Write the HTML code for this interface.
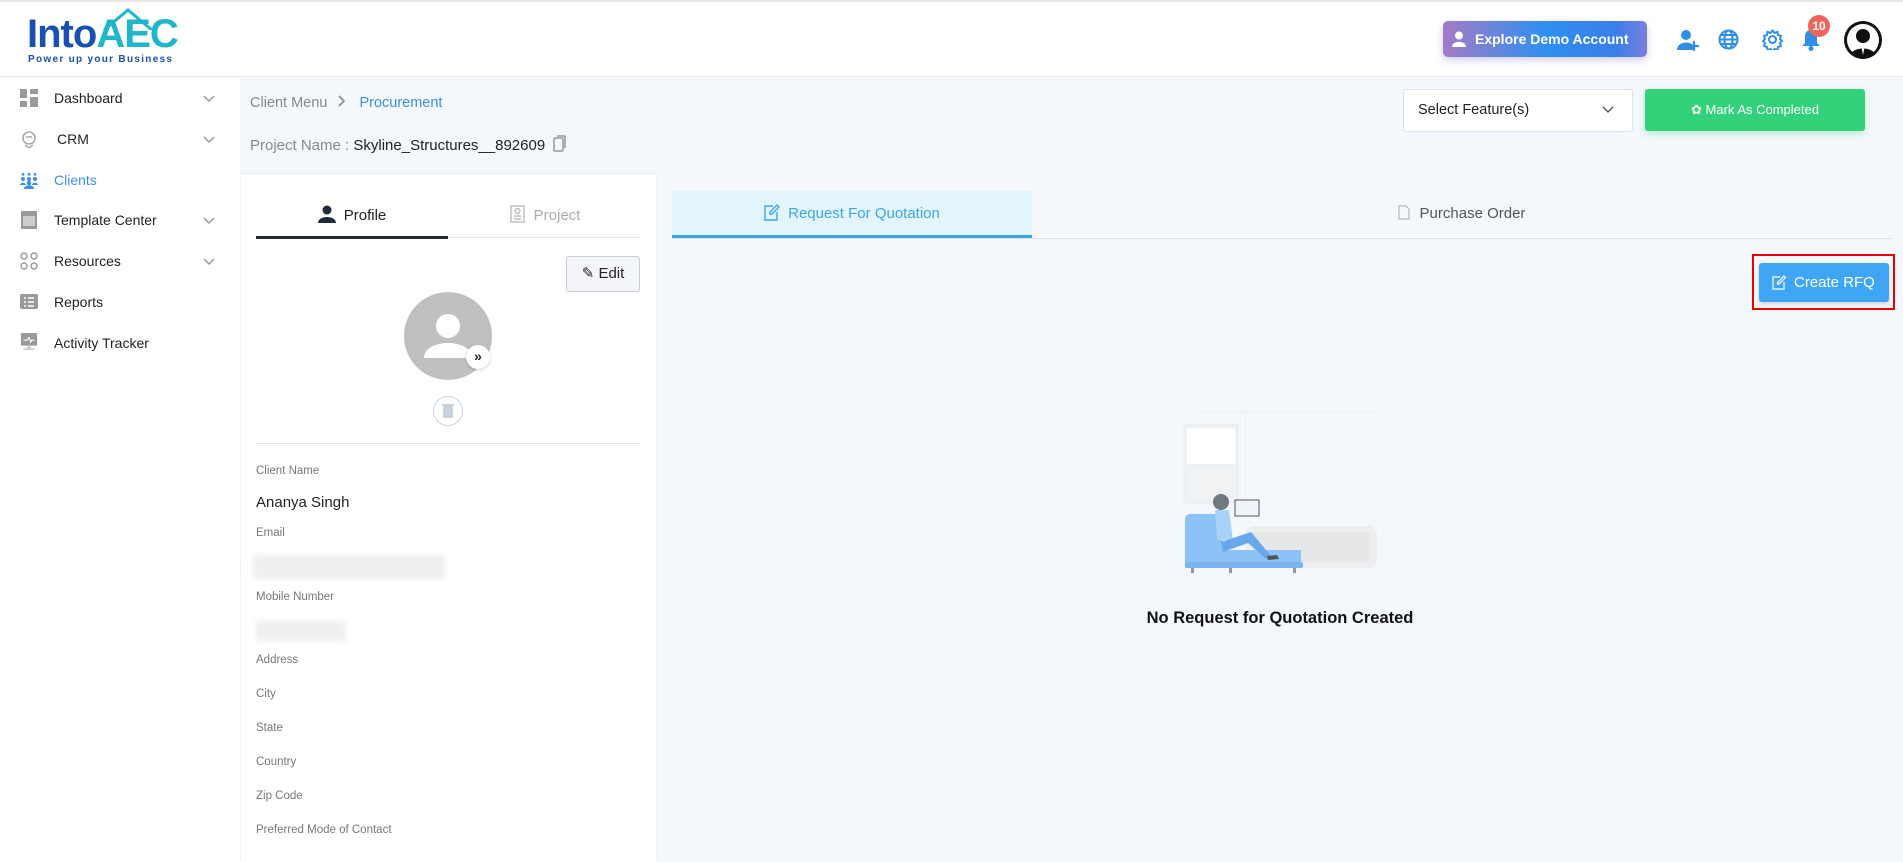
<!DOCTYPE html>
<html><head><meta charset="utf-8">
<style>
*{box-sizing:border-box;margin:0;padding:0}
body{width:1903px;height:862px;overflow:hidden;background:#f4f8fc;font-family:"Liberation Sans",sans-serif;color:#222;position:relative}
.abs{position:absolute}
header{position:absolute;left:0;top:0;width:1903px;height:77px;background:#fff;border-bottom:1px solid #e6e9ee;border-top:2px solid #e4e4e4}
.side{position:absolute;left:0;top:77px;width:240px;height:785px;background:#fff}
.si{position:absolute;left:0;width:240px;height:30px;display:flex;align-items:center;font-size:14px;color:#222}
.si .ic{position:absolute;left:20px;width:18px;height:18px}
.si .tx{position:absolute;left:54px}
.si .ch{position:absolute;left:202px;top:8px}
.lbl{position:absolute;left:256px;font-size:11.5px;color:#777}
.card{position:absolute;left:241px;top:175px;width:415px;height:687px;background:#fff;box-shadow:0 0 4px rgba(0,0,0,.04)}
</style></head><body>
<header>
 <div class="abs" style="left:27px;top:12px;font-size:40px;font-weight:bold;color:#1a4fb4;letter-spacing:-1px;line-height:40px">Into<span style="color:#1fb6c9">AEC</span></div>
 <svg class="abs" style="left:98px;top:6px" width="60" height="22"><path d="M6 22 L30 2 L54 22" fill="none" stroke="#1fb6c9" stroke-width="3"/></svg>
 <div class="abs" style="left:28px;top:52px;font-size:10px;font-weight:bold;color:#1a4fb4;letter-spacing:1.3px">Power up your Business</div>
 <div class="abs" style="left:1443px;top:19px;width:204px;height:36px;border-radius:5px;background:linear-gradient(90deg,#a67bc6,#2f8ff0 50%,#3a7fe8 85%,#7b7fe0);box-shadow:0 3px 8px rgba(90,90,200,.3);color:#fff;font-weight:bold;font-size:14px;line-height:36px;padding-left:32px">
  <svg class="abs" style="left:9px;top:10px" width="16" height="16"><circle cx="7" cy="4.5" r="4" fill="#fff"/><path d="M0 16 C0 9 14 9 14 16Z" fill="#fff"/></svg>Explore Demo Account</div>
 <svg class="abs" style="left:1677px;top:27px" width="22" height="22"><circle cx="9" cy="6" r="5" fill="#2f8fe8"/><path d="M0 21 C0 11 18 11 18 21Z" fill="#2f8fe8"/><path d="M17 13v8M13 17h8" stroke="#2f8fe8" stroke-width="2.2" stroke-linecap="round"/></svg>
 <svg class="abs" style="left:1718px;top:27px" width="21" height="21" fill="none" stroke="#2f8fe8" stroke-width="2"><circle cx="10.5" cy="10.5" r="9"/><ellipse cx="10.5" cy="10.5" rx="4" ry="9"/><path d="M1.5 10.5h18M3 6h15M3 15h15"/></svg>
 <svg class="abs" style="left:1762px;top:27px" width="21" height="21" fill="none" stroke="#2f8fe8" stroke-width="2"><circle cx="10.5" cy="10.5" r="3.5"/><path d="M10.5 1.5l2 2.5 3-1 .5 3 3 1-1 3 2 2-2 2 1 3-3 1-.5 3-3-1-2 2.5-2-2.5-3 1-.5-3-3-1 1-3-2-2 2-2-1-3 3-1 .5-3 3 1z"/></svg>
 <svg class="abs" style="left:1801px;top:27px" width="20" height="22"><path d="M10 1C5 1 4 5 4 8v6l-3 3h18l-3-3V8c0-3-1-7-6-7z" fill="#2f8fe8"/><circle cx="10" cy="19.5" r="2.5" fill="#2f8fe8"/></svg>
 <div class="abs" style="left:1808px;top:13px;width:22px;height:22px;border-radius:50%;background:#f0645a;color:#fff;font-size:12px;font-weight:bold;text-align:center;line-height:22px">10</div>
 <div class="abs" style="left:1844px;top:19px;width:38px;height:38px;border-radius:50%;background:#111;overflow:hidden">
  <svg width="38" height="38"><circle cx="19" cy="19" r="16" fill="#fff"/><circle cx="19" cy="15" r="7" fill="#111"/><path d="M5 38 C5 24 33 24 33 38Z" fill="#111"/><path d="M17 24l2 10 2-10z" fill="#fff"/></svg></div>
</header>

<div class="side">
 <div class="si" style="top:6px"><svg class="ic" style="top:6px" viewBox="0 0 18 18" fill="#9a9a9a"><rect x="0" y="0" width="7" height="9"/><rect x="10" y="0" width="8" height="5"/><rect x="0" y="12" width="7" height="6"/><rect x="10" y="8" width="8" height="10"/></svg><span class="tx">Dashboard</span><svg class="ch" width="14" height="14" fill="none" stroke="#999" stroke-width="1.5"><path d="M2 5l5 5 5-5"/></svg></div>
 <div class="si" style="top:47px"><svg class="ic" style="top:6px" viewBox="0 0 18 18" fill="none" stroke="#999" stroke-width="1.3"><circle cx="9" cy="8" r="6"/><path d="M5 15l4 3 4-3M6 7h6"/></svg><span class="tx" style="left:57px">CRM</span><svg class="ch" width="14" height="14" fill="none" stroke="#999" stroke-width="1.5"><path d="M2 5l5 5 5-5"/></svg></div>
 <div class="si" style="top:88px;color:#3b8fe6"><svg class="ic" style="top:6px" viewBox="0 0 18 18" fill="#3b8fe6"><circle cx="3" cy="8" r="2"/><circle cx="9" cy="8" r="2"/><circle cx="15" cy="8" r="2"/><path d="M0 14c0-3 6-3 6 0zM12 14c0-3 6-3 6 0z"/><path d="M4 18c0-5 10-5 10 0z"/><circle cx="9" cy="12" r="2.3"/><path d="M3 1l.6 1.5H5L4 3.5l.4 1.5L3 4.2 1.6 5 2 3.5 1 2.5h1.4zM9 1l.6 1.5H11L10 3.5l.4 1.5L9 4.2 7.6 5 8 3.5 7 2.5h1.4zM15 1l.6 1.5H17L16 3.5l.4 1.5L15 4.2 13.6 5 14 3.5 13 2.5h1.4z"/></svg><span class="tx">Clients</span></div>
 <div class="si" style="top:128px"><svg class="ic" style="top:6px" viewBox="0 0 18 18"><rect x="1" y="0" width="16" height="18" fill="#9a9a9a"/><rect x="3" y="5" width="12" height="10" fill="#ccc"/></svg><span class="tx">Template Center</span><svg class="ch" width="14" height="14" fill="none" stroke="#999" stroke-width="1.5"><path d="M2 5l5 5 5-5"/></svg></div>
 <div class="si" style="top:169px"><svg class="ic" style="top:6px" viewBox="0 0 18 18" fill="none" stroke="#999" stroke-width="1.4"><circle cx="4" cy="4" r="3"/><circle cx="14" cy="4" r="3"/><circle cx="4" cy="14" r="3"/><circle cx="14" cy="14" r="3"/></svg><span class="tx">Resources</span><svg class="ch" width="14" height="14" fill="none" stroke="#999" stroke-width="1.5"><path d="M2 5l5 5 5-5"/></svg></div>
 <div class="si" style="top:210px"><svg class="ic" style="top:6px" viewBox="0 0 18 18"><rect x="0" y="1" width="18" height="15" rx="2" fill="#9a9a9a"/><path d="M4 5h2M4 9h2M4 13h2M8 5h6M8 9h6M8 13h6" stroke="#fff" stroke-width="1.5"/></svg><span class="tx">Reports</span></div>
 <div class="si" style="top:251px"><svg class="ic" style="top:5px" viewBox="0 0 18 20"><rect x="0" y="0" width="18" height="14" rx="1" fill="#9a9a9a"/><path d="M3 8h4l2-3 2 5 1-2h3" stroke="#fff" fill="none" stroke-width="1.2"/><rect x="7" y="15" width="4" height="2" fill="#bbb"/><rect x="3" y="17" width="12" height="2" fill="#ccc"/></svg><span class="tx">Activity Tracker</span></div>
</div>

<div class="abs" style="left:250px;top:95px;font-size:14.5px;color:#888">Client Menu <svg width="14" height="12" style="margin:0 6px 0 4px" fill="none" stroke="#888" stroke-width="1.6"><path d="M4 1l5 5-5 5"/></svg> <span style="color:#3b8fe6">Procurement</span></div>
<div class="abs" style="left:250px;top:135px;font-size:15px;color:#888">Project Name : <span style="color:#222">Skyline_Structures__892609</span> <svg width="14" height="18" style="vertical-align:-3px;margin-left:4px" fill="none" stroke="#888" stroke-width="1.3"><rect x="1" y="3" width="9" height="13" rx="1"/><path d="M4 1h8v12"/></svg></div>

<div class="abs" style="left:1403px;top:89px;width:230px;height:43px;background:#fff;border:1px solid #dde3ea;border-radius:3px;font-size:14.5px;line-height:41px;padding-left:14px">Select Feature(s)<svg class="abs" style="left:198px;top:15px" width="12" height="10" fill="none" stroke="#555" stroke-width="1.5"><path d="M1 2l5 5 5-5"/></svg></div>
<div class="abs" style="left:1645px;top:89px;width:220px;height:42px;background:#33d17a;border-radius:3px;box-shadow:0 3px 8px rgba(51,209,122,.3);color:#fff;font-size:13px;text-align:center;line-height:42px">✿ Mark As Completed</div>

<div class="card">
 <div class="abs" style="left:15px;top:62px;width:384px;height:1px;background:#e2e5ea"></div>
 <div class="abs" style="left:15px;top:61px;width:192px;height:3px;background:#1f2937"></div>
 <div class="abs" style="left:15px;top:30px;width:192px;text-align:center;font-size:15px;color:#222"><svg width="18" height="18" style="vertical-align:-3px;margin-right:8px"><circle cx="9" cy="5" r="4.5" fill="#1f2937"/><path d="M0 18c0-8 18-8 18 0z" fill="#1f2937"/></svg>Profile</div>
 <div class="abs" style="left:207px;top:30px;width:192px;text-align:center;font-size:15px;color:#aaa"><svg width="18" height="18" style="vertical-align:-3px;margin-right:8px" fill="none" stroke="#bbb" stroke-width="1.4"><rect x="3" y="1" width="13" height="16"/><circle cx="9.5" cy="6" r="2.5"/><path d="M6 11h7M6 14h7"/></svg>Project</div>
 <div class="abs" style="left:325px;top:81px;width:74px;height:36px;border:1px solid #c9ced6;background:#f3f5f8;border-radius:3px;font-size:15px;line-height:34px;text-align:center;color:#222">✎ Edit</div>
 <div class="abs" style="left:163px;top:117px;width:88px;height:88px;border-radius:50%;background:#c0c0c0;overflow:hidden"><svg width="88" height="88"><circle cx="44" cy="34" r="12" fill="#fff"/><path d="M20 66c0-20 48-20 48 0z" fill="#fff"/></svg></div>
 <div class="abs" style="left:225px;top:170px;width:24px;height:24px;border-radius:50%;background:#fff;box-shadow:0 1px 3px rgba(0,0,0,.2);font-size:14px;text-align:center;line-height:22px;font-weight:bold">»</div>
 <div class="abs" style="left:192px;top:221px;width:30px;height:30px;border-radius:50%;border:1px solid #ccd3dc"><svg class="abs" style="left:8px;top:6px" width="12" height="16"><rect x="1" y="3" width="10" height="12" rx="1" fill="#c8d0dc"/><rect x="0" y="1" width="12" height="2" fill="#c8d0dc"/></svg></div>
 <div class="abs" style="left:15px;top:268px;width:384px;height:1px;background:#e0e3e8"></div>
</div>
<div class="lbl" style="top:465px">Client Name</div>
<div class="abs" style="left:256px;top:494px;font-size:15px;color:#222">Ananya Singh</div>
<div class="lbl" style="top:527px">Email</div>
<div class="abs" style="left:253px;top:555px;width:192px;height:24px;background:#eeeff0;filter:blur(3px)"></div>
<div class="lbl" style="top:591px">Mobile Number</div>
<div class="abs" style="left:256px;top:621px;width:90px;height:20px;background:#eeeff0;filter:blur(3px)"></div>
<div class="lbl" style="top:654px">Address</div>
<div class="lbl" style="top:688px">City</div>
<div class="lbl" style="top:722px">State</div>
<div class="lbl" style="top:756px">Country</div>
<div class="lbl" style="top:790px">Zip Code</div>
<div class="lbl" style="top:824px">Preferred Mode of Contact</div>

<div class="abs" style="left:671px;top:238px;width:1220px;height:1px;background:#d9dfe7"></div>
<div class="abs" style="left:672px;top:191px;width:360px;height:47px;background:#e2f4fc;border-bottom:3px solid #3ea6e6;text-align:center;line-height:45px;font-size:15px;color:#3ea6e6"><svg width="16" height="17" style="vertical-align:-3px;margin-right:8px" fill="none" stroke="#3ea6e6" stroke-width="1.4"><path d="M9 2H1v14h12V8"/><path d="M13 1l2 2-7 7H6V8z"/></svg>Request For Quotation</div>
<div class="abs" style="left:1032px;top:191px;width:859px;height:47px;text-align:center;line-height:45px;font-size:15px;color:#555"><svg width="12" height="15" style="vertical-align:-2px;margin-right:10px" fill="none" stroke="#aaa" stroke-width="1"><path d="M1 1h7l3 3v10H1z"/></svg>Purchase Order</div>

<div class="abs" style="left:1752px;top:254px;width:143px;height:56px;border:2px solid #e00"></div>
<div class="abs" style="left:1759px;top:263px;width:130px;height:39px;background:#3ea6f5;border-radius:3px;box-shadow:0 2px 4px rgba(0,0,0,.15);color:#fff;font-size:15px;line-height:39px;padding-left:35px"><svg class="abs" style="left:13px;top:12px" width="14" height="15" fill="none" stroke="#fff" stroke-width="1.2"><path d="M8 2H1v12h11V7"/><path d="M12 1l1.5 1.5L7 9H5.5V7.5z"/></svg>Create RFQ</div>

<svg class="abs" style="left:1183px;top:404px" width="200" height="170">
 <rect x="62" y="8" width="1" height="100" fill="#eef1f4"/><rect x="14" y="8" width="180" height="1" fill="#eef1f4"/>
 <rect x="0" y="20" width="56" height="80" fill="#eef1f4"/><rect x="4" y="24" width="48" height="36" fill="#fff"/><rect x="4" y="63" width="48" height="33" fill="#f0f2f4"/>
 <rect x="62" y="122" width="132" height="42" rx="9" fill="#eceeef"/>
 <rect x="70" y="128" width="116" height="30" fill="#e5e7e9"/>
 <path d="M2 160 L2 116 Q2 110 8 110 L40 110 L40 146 L118 146 L118 160 Z" fill="#8cc2f6"/>
 <rect x="2" y="158" width="118" height="6" rx="2" fill="#7ab3ee"/>
 <rect x="8" y="164" width="3" height="5" fill="#8a9aa8"/><rect x="46" y="164" width="3" height="5" fill="#8a9aa8"/><rect x="110" y="164" width="3" height="5" fill="#8a9aa8"/>
 <circle cx="38" cy="98" r="8" fill="#6e7a80"/>
 <path d="M32 106 h14 l4 30 h-16z" fill="#a8d2f7"/>
 <path d="M38 138 l30-10 l20 24 l-5 3 l-18-16 l-25 9z" fill="#6aa8ec"/>
 <path d="M84 152 l10 -1 l2 4 l-11 1z" fill="#555"/>
 <rect x="52" y="96" width="24" height="16" fill="#eef4fb" stroke="#555" stroke-width="1"/>
</svg>
<div class="abs" style="left:1080px;top:609px;width:400px;text-align:center;font-size:16.5px;font-weight:bold;color:#111">No Request for Quotation Created</div>
</body></html>
